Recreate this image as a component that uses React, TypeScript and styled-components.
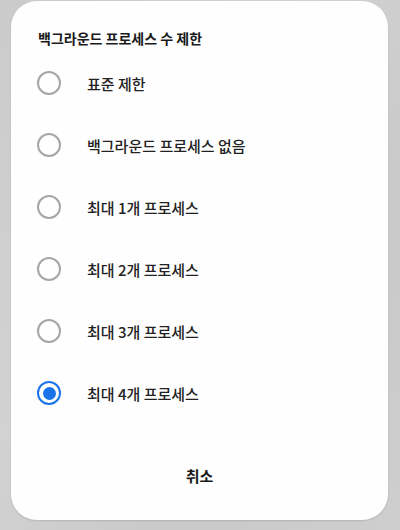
import React, {useState} from 'react';
import styled, {createGlobalStyle} from "styled-components";

const GlobalStyle = createGlobalStyle`
    html, body {
        margin: 0;
        padding: 0;
    }
    body {
        font-family: "Noto Sans CJK KR", "Noto Sans", sans-serif;
    }
`;

const Screen = styled.div`
    width: 400px;
    height: 530px;
    background: linear-gradient(125deg, #cbcbcb 0%, #d2d2d2 40%, #c9c9c9 70%, #cecece 100%);
    padding: 1px 12px 0 11px;
    box-sizing: border-box;
    overflow: hidden;
`;

const Dialog = styled.div`
    height: 519px;
    background: #fefefe;
    border-radius: 26px;
    box-shadow: 0 1px 2px rgba(0, 0, 0, 0.12);
    display: flex;
    flex-direction: column;
    padding: 27px 0 21px;
    box-sizing: border-box;
`;

const Title = styled.div`
    font-size: 14px;
    line-height: 20px;
    font-weight: 700;
    color: #1a1a1a;
    padding-left: 27px;
    margin-bottom: 4px;
`;

const Option = styled.div`
    height: 62px;
    display: flex;
    align-items: center;
    padding-left: 26px;
    gap: 26px;
    cursor: pointer;
`;

const Radio = styled.div<{ checked: boolean }>`
    width: 24px;
    height: 24px;
    box-sizing: border-box;
    border-radius: 50%;
    border: 2px solid ${p => p.checked ? "#1a73e8" : "#a6a6a6"};
    display: flex;
    align-items: center;
    justify-content: center;

    &::after {
        content: "";
        display: ${p => p.checked ? "block" : "none"};
        width: 13px;
        height: 13px;
        border-radius: 50%;
        background: #1a73e8;
    }
`;

const Label = styled.span`
    font-size: 15px;
    font-weight: 500;
    color: #222;
`;

const Cancel = styled.button`
    margin-top: auto;
    height: 48px;
    border: none;
    background: none;
    font-family: inherit;
    font-size: 15px;
    font-weight: 700;
    color: #1a1a1a;
    cursor: pointer;
`;

const options = [
    "표준 제한",
    "백그라운드 프로세스 없음",
    "최대 1개 프로세스",
    "최대 2개 프로세스",
    "최대 3개 프로세스",
    "최대 4개 프로세스",
];

export default function App() {
    const [selected, setSelected] = useState(5);

    return (
        <Screen>
            <GlobalStyle/>
            <Dialog>
                <Title>백그라운드 프로세스 수 제한</Title>
                {options.map((o, i) => (
                    <Option key={o} onClick={() => setSelected(i)}>
                        <Radio checked={selected === i}/>
                        <Label>{o}</Label>
                    </Option>
                ))}
                <Cancel>취소</Cancel>
            </Dialog>
        </Screen>
    )
}
